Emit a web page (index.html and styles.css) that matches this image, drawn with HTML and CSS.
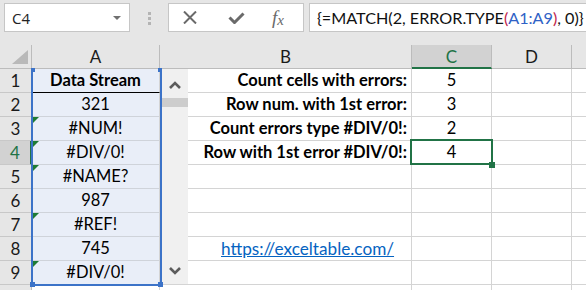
FILE: index.html
```html
<!DOCTYPE html>
<html>
<head>
<meta charset="utf-8">
<link rel="stylesheet" href="styles.css">
</head>
<body>
<div class="topbar">
  <div class="namebox"><span>C4</span><span class="dd"></span></div>
  <div class="grip"><i></i><i></i><i></i></div>
  <div class="fxbox">
    <svg class="ic-x" width="14" height="13" viewBox="0 0 14 13"><path d="M1 0.5 L13 12.5 M13 0.5 L1 12.5" stroke="#6a6a6a" stroke-width="2" fill="none"/></svg>
    <svg class="ic-ok" width="17" height="12" viewBox="0 0 17 12"><path d="M1.5 5.5 L6.5 10.5 L15.5 1.5" stroke="#6a6a6a" stroke-width="3" fill="none"/></svg>
    <span class="ic-fx"><span class="f">f</span><span class="x">x</span></span>
  </div>
  <div class="formula">{=MATCH(2, ERROR.TYPE<span class="paren">(</span><span class="ref">A1:A9</span><span class="paren">)</span>, 0)}</div>
</div>

<div class="sheet">
  <div class="corner"><div class="tri"></div></div>
  <div class="ch">A</div>
  <div class="ch">B</div>
  <div class="ch sel">C</div>
  <div class="ch">D</div>
  <div class="ch last"></div>

  <div class="rh">1</div>
  <div class="c a head">Data Stream</div>
  <div class="c lbl">Count cells with errors:</div>
  <div class="c val">5</div>
  <div class="c"></div>
  <div class="c last"></div>

  <div class="rh">2</div>
  <div class="c a">321</div>
  <div class="c lbl">Row num. with 1st error:</div>
  <div class="c val">3</div>
  <div class="c"></div>
  <div class="c last"></div>

  <div class="rh">3</div>
  <div class="c a err">#NUM!</div>
  <div class="c lbl">Count errors type #DIV/0!:</div>
  <div class="c val">2</div>
  <div class="c"></div>
  <div class="c last"></div>

  <div class="rh sel">4</div>
  <div class="c a err">#DIV/0!</div>
  <div class="c lbl">Row with 1st error #DIV/0!:</div>
  <div class="c val">4</div>
  <div class="c"></div>
  <div class="c last"></div>

  <div class="rh">5</div>
  <div class="c a err">#NAME?</div>
  <div class="c"></div>
  <div class="c"></div>
  <div class="c"></div>
  <div class="c last"></div>

  <div class="rh">6</div>
  <div class="c a">987</div>
  <div class="c"></div>
  <div class="c"></div>
  <div class="c"></div>
  <div class="c last"></div>

  <div class="rh">7</div>
  <div class="c a err">#REF!</div>
  <div class="c"></div>
  <div class="c"></div>
  <div class="c"></div>
  <div class="c last"></div>

  <div class="rh">8</div>
  <div class="c a">745</div>
  <div class="c link"><a href="#">https://exceltable.com/</a></div>
  <div class="c"></div>
  <div class="c"></div>
  <div class="c last"></div>

  <div class="rh">9</div>
  <div class="c a err">#DIV/0!</div>
  <div class="c"></div>
  <div class="c"></div>
  <div class="c"></div>
  <div class="c last"></div>

  <div class="rh"></div>
  <div class="c"></div>
  <div class="c"></div>
  <div class="c"></div>
  <div class="c"></div>
  <div class="c last"></div>
</div>

<div class="scrollbar">
  <svg class="chev" width="12" height="8" viewBox="0 0 12 8"><path d="M1 7 L6 2 L11 7" stroke="#5c5c5c" stroke-width="2.6" fill="none"/></svg>
  <div class="thumb"></div>
  <div class="spacer"></div>
  <svg class="chev" width="12" height="8" viewBox="0 0 12 8"><path d="M1 1 L6 6 L11 1" stroke="#5c5c5c" stroke-width="2.6" fill="none"/></svg>
</div>

<div class="range"></div>
<div class="rk tl"></div>
<div class="rk tr"></div>
<div class="rk bl"></div>
<div class="rk br"></div>

<div class="selection"></div>
<div class="handle"></div>
</body>
</html>
```

FILE: styles.css
```css
* { box-sizing: border-box; }

body {
  margin: 0;
  width: 586px;
  height: 290px;
  overflow: hidden;
  position: relative;
  background: #ffffff;
  font-family: Lato, "Liberation Sans", sans-serif;
  color: #000;
}

/* ---------- formula bar ---------- */
.topbar {
  height: 45px;
  background: #e6e6e6;
  display: flex;
  align-items: flex-start;
  padding-top: 3px;
}

.namebox {
  margin-left: 4px;
  width: 126px;
  height: 29px;
  background: #fff;
  border: 1px solid #c6c6c6;
  display: flex;
  align-items: center;
  justify-content: space-between;
  padding: 0 8px 0 7px;
  font-family: "Open Sans", sans-serif;
  font-size: 15px;
  color: #222;
}

.dd {
  width: 0;
  height: 0;
  border-left: 4px solid transparent;
  border-right: 4px solid transparent;
  border-top: 4px solid #707070;
}

.grip {
  width: 38px;
  display: flex;
  flex-direction: column;
  align-items: center;
  gap: 2px;
  padding-top: 9px;
}

.grip i {
  display: block;
  width: 3px;
  height: 3px;
  background: #b4b4b4;
}

.fxbox {
  width: 136px;
  height: 29px;
  background: #fff;
  border: 1px solid #c6c6c6;
  display: flex;
  align-items: center;
  padding-left: 14px;
}

.ic-ok { margin-left: 31px; }

.ic-fx {
  margin-left: 27px;
  font-family: "Liberation Serif", serif;
  font-style: italic;
  color: #6a6a6a;
  line-height: 1;
}

.ic-fx .f { font-size: 19px; }
.ic-fx .x { font-size: 15px; position: relative; top: 1px; }

.formula {
  margin-left: 5px;
  flex: 1;
  height: 29px;
  background: #fff;
  border: 1px solid #c6c6c6;
  border-right: none;
  padding-left: 7px;
  font-size: 16.2px;
  line-height: 27px;
  white-space: nowrap;
  color: #111;
}

.formula .paren { color: #c0254b; }
.formula .ref { color: #2f62c6; }

/* ---------- grid ---------- */
.sheet {
  display: grid;
  grid-template-columns: 32px 128px 252px 80px 80px 14px;
  grid-template-rows: repeat(11, 24px);
}

.corner {
  background: #e6e6e6;
  border-right: 1px solid #bcbcbc;
  border-bottom: 1px solid #bcbcbc;
  display: flex;
  justify-content: flex-end;
  align-items: flex-end;
  padding: 0 3px 4px 0;
}

.corner .tri {
  width: 16px;
  height: 14px;
  background: #b9b9b9;
  clip-path: polygon(100% 0, 100% 100%, 0 100%);
}

.ch {
  background: #e6e6e6;
  border-right: 1px solid #bcbcbc;
  border-bottom: 1px solid #bcbcbc;
  text-align: center;
  font-size: 17px;
  line-height: 24px;
  color: #1a1a1a;
}

.ch.sel {
  background: #d2d2d2;
  color: #217346;
  border-bottom: 2px solid #217346;
}

.ch.last { border-right: none; }

.rh {
  background: #e6e6e6;
  border-right: 1px solid #bcbcbc;
  border-bottom: 1px solid #c8c8c8;
  text-align: center;
  font-size: 17px;
  line-height: 23px;
  color: #1a1a1a;
}

.rh.sel {
  background: #d2d2d2;
  color: #217346;
  border-right: 2px solid #217346;
}

.c {
  position: relative;
  border-right: 1px solid #d4d4d4;
  border-bottom: 1px solid #d4d4d4;
  font-size: 16.5px;
  line-height: 23px;
  white-space: nowrap;
  overflow: visible;
}

.c.last { border-right: none; }

.c.a {
  background: #e9eef8;
  text-align: center;
  border-bottom-color: #cfd3da;
}

.c.a.head {
  font-weight: 700;
  border-bottom: 1px solid #000;
}

.c.err::before {
  content: "";
  position: absolute;
  left: 1px;
  top: 0;
  width: 6px;
  height: 6px;
  background: #1e7b34;
  clip-path: polygon(0 0, 100% 0, 0 100%);
}

.c.lbl {
  text-align: right;
  padding-right: 4px;
  font-weight: 700;
}

.c.val { text-align: center; }

.c.link {
  padding-left: 61px;
  font-size: 17.2px;
}

.c.link a {
  color: #0563c1;
  text-decoration: underline;
}

/* ---------- overlays ---------- */
.scrollbar {
  position: absolute;
  left: 161px;
  top: 69px;
  width: 27px;
  height: 215px;
  background: #f0f0f0;
  display: flex;
  flex-direction: column;
  align-items: center;
  padding: 12px 0 9px;
}

.scrollbar .thumb {
  margin-top: 9px;
  width: 26px;
  height: 9px;
  background: #cdcdcd;
}

.scrollbar .spacer { flex: 1; }

.range {
  position: absolute;
  left: 31px;
  top: 69px;
  width: 131px;
  height: 217px;
  border: 2px solid #3c73c8;
  border-top: none;
}

.rk {
  position: absolute;
  width: 4px;
  height: 4px;
  background: #3c73c8;
}

.rk.tl { left: 31px; top: 68px; }
.rk.tr { left: 158px; top: 68px; }
.rk.bl { left: 30px; top: 282px; width: 5px; height: 5px; }
.rk.br { left: 158px; top: 282px; width: 5px; height: 5px; }

.selection {
  position: absolute;
  left: 410px;
  top: 139px;
  width: 83px;
  height: 26px;
  border: 2px solid #217346;
}

.handle {
  position: absolute;
  left: 489px;
  top: 162px;
  width: 6px;
  height: 6px;
  background: #217346;
}
```
